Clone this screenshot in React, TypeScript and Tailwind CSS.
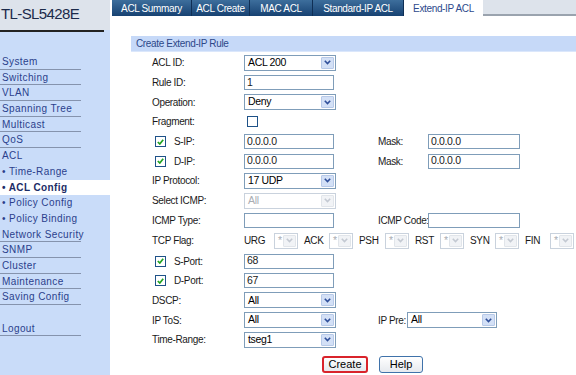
import type { ReactNode } from 'react'

const menu: { label: string; line: boolean; sub?: boolean; active?: boolean }[] = [
  { label: 'System', line: true },
  { label: 'Switching', line: true },
  { label: 'VLAN', line: true },
  { label: 'Spanning Tree', line: true },
  { label: 'Multicast', line: true },
  { label: 'QoS', line: true },
  { label: 'ACL', line: false },
  { label: 'Time-Range', line: false, sub: true },
  { label: 'ACL Config', line: false, sub: true, active: true },
  { label: 'Policy Config', line: false, sub: true },
  { label: 'Policy Binding', line: false, sub: true },
  { label: 'Network Security', line: true },
  { label: 'SNMP', line: true },
  { label: 'Cluster', line: true },
  { label: 'Maintenance', line: true },
  { label: 'Saving Config', line: true },
]

const tabs = ['ACL Summary', 'ACL Create', 'MAC ACL', 'Standard-IP ACL', 'Extend-IP ACL']

function Chevron({ disabled }: { disabled?: boolean }) {
  return (
    <svg width="7" height="5" viewBox="0 0 7 5">
      <path
        d="M0.8 0.8 L3.5 3.6 L6.2 0.8"
        fill="none"
        stroke={disabled ? '#c3c9d2' : '#2f4f9a'}
        strokeWidth="1.6"
      />
    </svg>
  )
}

function Select({ value, width, disabled }: { value: string; width: string; disabled?: boolean }) {
  return (
    <div
      className={`flex h-[16px] items-center border bg-white text-[10.5px] ${width} ${
        disabled ? 'border-[#c9d2dd] text-[#a9adb3]' : 'border-[#7f9db9] text-black'
      }`}
    >
      <span className="flex-1 truncate pl-[3px]">{value}</span>
      <span
        className={`mr-[1px] flex h-[12px] w-[13px] items-center justify-center rounded-[1px] border ${
          disabled ? 'border-[#e1e5ea] bg-[#f1f3f6]' : 'border-[#b7c9e8] bg-[#d3e0f6]'
        }`}
      >
        <Chevron disabled={disabled} />
      </span>
    </div>
  )
}

function Input({ value = '', width = 'w-[90px]' }: { value?: string; width?: string }) {
  return (
    <div className={`flex h-[15px] items-center border border-[#7f9db9] bg-white pl-[2px] text-[10.5px] ${width}`}>
      {value}
    </div>
  )
}

function Check({ checked }: { checked?: boolean }) {
  return (
    <span className="flex h-[11px] w-[11px] items-center justify-center border border-[#1e5288] bg-white">
      {checked && (
        <svg width="7" height="6" viewBox="0 0 7 6">
          <path d="M0.8 3 L2.8 5 L6.2 0.8" fill="none" stroke="#21a321" strokeWidth="1.7" />
        </svg>
      )}
    </span>
  )
}

function Row({ label, children, check }: { label: string; children?: ReactNode; check?: boolean }) {
  return (
    <div className="flex h-[19.7px] items-center">
      {check ? (
        <div className="flex w-[92px] items-center pl-[3px]">
          <Check checked />
          <span className="ml-[8px]">{label}</span>
        </div>
      ) : (
        <div className="w-[92px]">{label}</div>
      )}
      {children}
    </div>
  )
}

function Right({ label, labelW, children }: { label: string; labelW: string; children: ReactNode }) {
  return (
    <>
      <div className={`whitespace-nowrap ${labelW}`}>{label}</div>
      {children}
    </>
  )
}

const flags: [string, string][] = [
  ['URG', 'w-[30px]'],
  ['ACK', 'w-[25px]'],
  ['PSH', 'w-[26px]'],
  ['RST', 'w-[25px]'],
  ['SYN', 'w-[25px]'],
  ['FIN', 'w-[25px]'],
]

export default function App() {
  return (
    <div
      className="flex h-[375px] w-[576px] overflow-hidden bg-white text-[10px] tracking-[-0.35px] text-[#1a1a1a]"
      style={{ fontFamily: '"Liberation Sans", Arial, sans-serif' }}
    >
      {/* Sidebar */}
      <div className="flex w-[110px] shrink-0 flex-col bg-[#c9dcf9]">
        <div className="h-[30px] bg-[#dde3eb] pl-[1px] pt-[5px] text-[15px] leading-[18px] tracking-[-0.6px] text-[#1b2a4a]">
          TL-SL5428E
        </div>
        <div className="h-[2px] w-[104px] bg-[#222]" />
        <div className="mt-[22px] flex flex-col">
          {menu.map((m) => (
            <div
              key={m.label}
              className={`h-[15.7px] ${m.active ? 'bg-white font-bold text-[#1c2c66]' : 'text-[#2b3f8c]'}`}
            >
              <div
                className={`h-full w-[81px] whitespace-nowrap pl-[2px] leading-[15px] tracking-[0.4px] ${
                  m.line ? 'border-b border-[#8593ad]' : ''
                }`}
              >
                {m.sub ? '• ' : ''}
                {m.label}
              </div>
            </div>
          ))}
          <div className="mt-[15.6px] h-[15.7px] w-[81px] border-b border-[#8593ad] pl-[2px] leading-[15px] tracking-[0.4px] text-[#2b3f8c]">
            Logout
          </div>
        </div>
      </div>

      {/* Main */}
      <div className="ml-[2px] flex-1">
        <div className="flex h-[16px] bg-gradient-to-b from-[#3d6e9c] to-[#174272]">
          {tabs.map((t, i) =>
            i === tabs.length - 1 ? (
              <div key={t} className="flex w-[79px] items-center justify-center bg-white text-[#2d4a8c]">
                {t}
              </div>
            ) : (
              <div
                key={t}
                className={`flex items-center justify-center border-r border-[#0f2f55] text-white ${
                  ['w-[80px]', 'w-[58px]', 'w-[63px]', 'w-[91px]'][i]
                }`}
              >
                {t}
              </div>
            ),
          )}
          <div className="flex-1 border-b-2 border-[#9aa3ae] bg-[#dde3eb]" />
        </div>

        <div className="ml-[19px] mt-[20px]">
          <div className="flex h-[16px] items-center border-b border-[#dbe7fb] bg-[#c6d9f8] pl-[5px] text-[#2d4888]">
            Create Extend-IP Rule
          </div>

          <div className="mt-[1px] pl-[21px]">
            <Row label="ACL ID:">
              <Select value="ACL 200" width="w-[92px]" />
            </Row>
            <Row label="Rule ID:">
              <Input value="1" />
            </Row>
            <Row label="Operation:">
              <Select value="Deny" width="w-[92px]" />
            </Row>
            <Row label="Fragment:">
              <span className="ml-[3px]">
                <Check />
              </span>
            </Row>
            <Row label="S-IP:" check>
              <div className="w-[134px]">
                <Input value="0.0.0.0" />
              </div>
              <Right label="Mask:" labelW="w-[50px]">
                <Input value="0.0.0.0" width="w-[92px]" />
              </Right>
            </Row>
            <Row label="D-IP:" check>
              <div className="w-[134px]">
                <Input value="0.0.0.0" />
              </div>
              <Right label="Mask:" labelW="w-[50px]">
                <Input value="0.0.0.0" width="w-[92px]" />
              </Right>
            </Row>
            <Row label="IP Protocol:">
              <Select value="17 UDP" width="w-[92px]" />
            </Row>
            <Row label="Select ICMP:">
              <Select value="All" width="w-[92px]" disabled />
            </Row>
            <Row label="ICMP Type:">
              <div className="w-[134px]">
                <Input />
              </div>
              <Right label="ICMP Code:" labelW="w-[50px]">
                <Input width="w-[92px]" />
              </Right>
            </Row>
            <div className="flex h-[21px] items-center">
              <div className="w-[92px]">TCP Flag:</div>
              {flags.map(([f, w]) => (
                <div key={f} className="mr-[6px] flex items-center">
                  <span className={w}>{f}</span>
                  <Select value="*" width="w-[24px]" disabled />
                </div>
              ))}
            </div>
            <Row label="S-Port:" check>
              <Input value="68" />
            </Row>
            <Row label="D-Port:" check>
              <Input value="67" />
            </Row>
            <Row label="DSCP:">
              <Select value="All" width="w-[92px]" />
            </Row>
            <Row label="IP ToS:">
              <div className="w-[134px]">
                <Select value="All" width="w-[92px]" />
              </div>
              <Right label="IP Pre:" labelW="w-[29px]">
                <Select value="All" width="w-[90px]" />
              </Right>
            </Row>
            <Row label="Time-Range:">
              <Select value="tseg1" width="w-[92px]" />
            </Row>

            <div className="ml-[170px] mt-[6px] flex gap-[11px] text-[11px] tracking-normal">
              <button className="h-[17px] w-[46px] rounded-[3px] border-2 border-[#d9232b] bg-gradient-to-b from-white to-[#e6e9ee] leading-[13px] text-black">
                Create
              </button>
              <button className="h-[17px] w-[44px] rounded-[3px] border border-[#3f72aa] bg-gradient-to-b from-white to-[#e6e9ee] leading-[15px] text-black">
                Help
              </button>
            </div>
          </div>
        </div>
      </div>
    </div>
  )
}
